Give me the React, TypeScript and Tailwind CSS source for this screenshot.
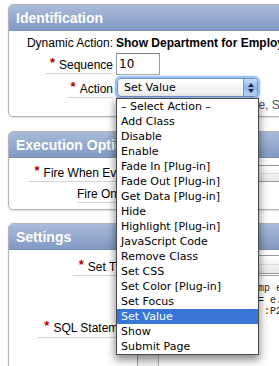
import React from "react";

type Option = { id: number; label: string };

const actions: Option[] = [
  { id: 1, label: "– Select Action –" },
  { id: 2, label: "Add Class" },
  { id: 3, label: "Disable" },
  { id: 4, label: "Enable" },
  { id: 5, label: "Fade In [Plug-in]" },
  { id: 6, label: "Fade Out [Plug-in]" },
  { id: 7, label: "Get Data [Plug-in]" },
  { id: 8, label: "Hide" },
  { id: 9, label: "Highlight [Plug-in]" },
  { id: 10, label: "JavaScript Code" },
  { id: 11, label: "Remove Class" },
  { id: 12, label: "Set CSS" },
  { id: 13, label: "Set Color [Plug-in]" },
  { id: 14, label: "Set Focus" },
  { id: 15, label: "Set Value" },
  { id: 16, label: "Show" },
  { id: 17, label: "Submit Page" },
];

const Req = () => (
  <span className="text-[#a30000] font-bold text-[13px] relative -top-[2px] mr-[4px]">*</span>
);

const PanelHeader = ({ title }: { title: string }) => (
  <div className="h-[26px] bg-gradient-to-b from-[#a9bbd9] to-[#8299c2] border-b border-[#7b8fb3] px-[7px] text-white font-bold text-[14px] leading-[26px]">
    {title}
  </div>
);

const AquaBox = ({ className }: { className: string }) => (
  <div
    className={
      "border border-[#9a9a9a] rounded-[4px] bg-gradient-to-b from-[#ffffff] via-[#f4f4f4] to-[#e6e6e6] " +
      className
    }
  >
    <div className="h-1/2 border-b border-[#d8d8d8]" />
  </div>
);

const App: React.FC = () => {
  return (
    <div className="relative w-[279px] h-[366px] overflow-hidden bg-white font-['Liberation_Sans',Arial,sans-serif] text-[12px] text-black">
      <div className="pl-[8px] pt-[4px] w-[480px] flex flex-col">
        {/* Identification */}
        <div className="border border-[#b3b3b3] rounded-[5px] overflow-hidden shadow-[0_1px_2px_rgba(0,0,0,0.15)]">
          <PanelHeader title="Identification" />
          <div className="pt-[5px] pb-[5px] flex flex-col">
            <div className="flex h-[14px] leading-[14px] whitespace-nowrap">
              <div className="w-[106px] shrink-0 text-right pr-[2px]">Dynamic Action:</div>
              <div className="font-bold pl-[1px]">Show Department for Employee Details</div>
            </div>
            <div className="flex mt-[3px] h-[22px] items-center">
              <div className="w-[106px] shrink-0 flex justify-end pr-[2px]">
                <span className="pl-[4px] border-b border-[#d4d4d4] leading-[14px] pb-[1px] mt-[3px] whitespace-nowrap">
                  <Req />
                  Sequence
                </span>
              </div>
              <div className="ml-[1px] w-[44px] h-[22px] border border-[#9c9c9c] border-t-[#7a7a7a] font-['DejaVu_Sans',sans-serif] text-[12px] leading-[20px] pl-[2px]">
                10
              </div>
            </div>
            <div className="flex mt-[3px] h-[19px] items-center">
              <div className="w-[106px] shrink-0 flex justify-end pr-[2px]">
                <span className="pl-[4px] border-b border-[#d4d4d4] leading-[14px] pb-[1px] mt-[5px] whitespace-nowrap">
                  <Req />
                  Action
                </span>
              </div>
              <div className="ml-[2px] w-[141px] h-[19px] rounded-[4px] border border-[#6f8fca] shadow-[0_0_0_2px_#9ec0f0,0_0_3px_2px_#b9d3f5] bg-gradient-to-b from-[#ffffff] to-[#ececec] flex items-center">
                <span className="flex-1 pl-[6px] font-['DejaVu_Sans',sans-serif] text-[11px] leading-[17px]">
                  Set Value
                </span>
                <div className="w-[14px] h-[17px] rounded-r-[3px] bg-gradient-to-b from-[#c5dcf7] via-[#8eb6e8] to-[#bcd6f6] border-l border-[#7a9bd0] flex flex-col items-center justify-center gap-[2px]">
                  <svg width="6" height="4" viewBox="0 0 6 4">
                    <path d="M0 4 L3 0 L6 4 Z" fill="#1d2a3f" />
                  </svg>
                  <svg width="6" height="4" viewBox="0 0 6 4">
                    <path d="M0 0 L3 4 L6 0 Z" fill="#1d2a3f" />
                  </svg>
                </div>
              </div>
            </div>
            <div className="flex mt-[2px] h-[12px] leading-[12px] whitespace-nowrap text-[#555]">
              <div className="w-[106px] shrink-0" />
              <div className="pl-[2px]">Choose an action, e.g. Hide, Show, Set Value</div>
            </div>
          </div>
        </div>

        {/* Execution Options */}
        <div className="mt-[14px] border border-[#b3b3b3] rounded-[5px] overflow-hidden shadow-[0_1px_2px_rgba(0,0,0,0.15)]">
          <PanelHeader title="Execution Options" />
          <div className="pt-[7px] pb-[6px] flex flex-col">
            <div className="flex items-start h-[17px] whitespace-nowrap">
              <div className="w-[174px] shrink-0 flex justify-end">
                <span className="pl-[7px] border-b border-[#d4d4d4] leading-[14px] pb-[1px] mt-[1px]">
                  <Req />
                  Fire When Event Result Is
                </span>
              </div>
              <AquaBox className="ml-[3px] w-[120px] h-[17px]" />
            </div>
            <div className="flex items-start mt-[4px] h-[17px] whitespace-nowrap">
              <div className="w-[174px] shrink-0 flex justify-end">
                <span className="border-b border-[#d4d4d4] leading-[14px] pb-[1px] mt-[1px]">
                  Fire On Initialization
                </span>
              </div>
              <AquaBox className="ml-[3px] w-[60px] h-[17px]" />
            </div>
          </div>
        </div>

        {/* Settings */}
        <div className="mt-[13px] border border-[#b3b3b3] rounded-[5px] overflow-hidden shadow-[0_1px_2px_rgba(0,0,0,0.15)]">
          <PanelHeader title="Settings" />
          <div className="pt-[5px] pb-[10px] flex flex-col">
            <div className="flex h-[19px] items-start whitespace-nowrap">
              <div className="w-[126px] shrink-0 flex justify-end">
                <span className="pl-[6px] border-b border-[#d4d4d4] leading-[14px] pb-[1px] mt-[5px]">
                  <Req />
                  Set Type
                </span>
              </div>
              <AquaBox className="ml-[2px] w-[300px] h-[19px]" />
            </div>
            <div className="flex mt-[1px] whitespace-nowrap">
              <div className="w-[126px] shrink-0 flex justify-end items-start">
                <span className="pl-[6px] border-b border-[#d4d4d4] leading-[14px] pb-[2px] mt-[46px]">
                  <Req />
                  SQL Statement
                </span>
              </div>
              <div className="ml-[2px] w-[320px] h-[110px] border border-[#a5a5a5] flex">
                <div className="w-[21px] shrink-0 border-r border-[#b8b8b8] bg-[#f6f6f6]" />
                <pre className="pl-[3px] pt-[7px] font-['Liberation_Mono',monospace] text-[10px] leading-[11.5px] text-[#222]">
                  {"  from dept d, emp e\n where d.deptno = e.deptno\n   and e.empno = :P2_EMPNO"}
                </pre>
              </div>
            </div>
          </div>
        </div>
      </div>

      {/* open select list */}
      <div className="absolute left-[116px] top-[98px] w-[143px] bg-white border border-[#4a4a4a] shadow-[0_4px_8px_1px_rgba(0,0,0,0.45)] font-['DejaVu_Sans',sans-serif] text-[11px]">
        {actions.map((a) => (
          <div
            key={a.id}
            className={
              a.label === "Set Value"
                ? "h-[15px] leading-[15px] pl-[4px] bg-[#3875d7] text-white whitespace-nowrap"
                : "h-[15px] leading-[15px] pl-[4px] whitespace-nowrap"
            }
          >
            {a.label}
          </div>
        ))}
      </div>
    </div>
  );
};

export default App;
